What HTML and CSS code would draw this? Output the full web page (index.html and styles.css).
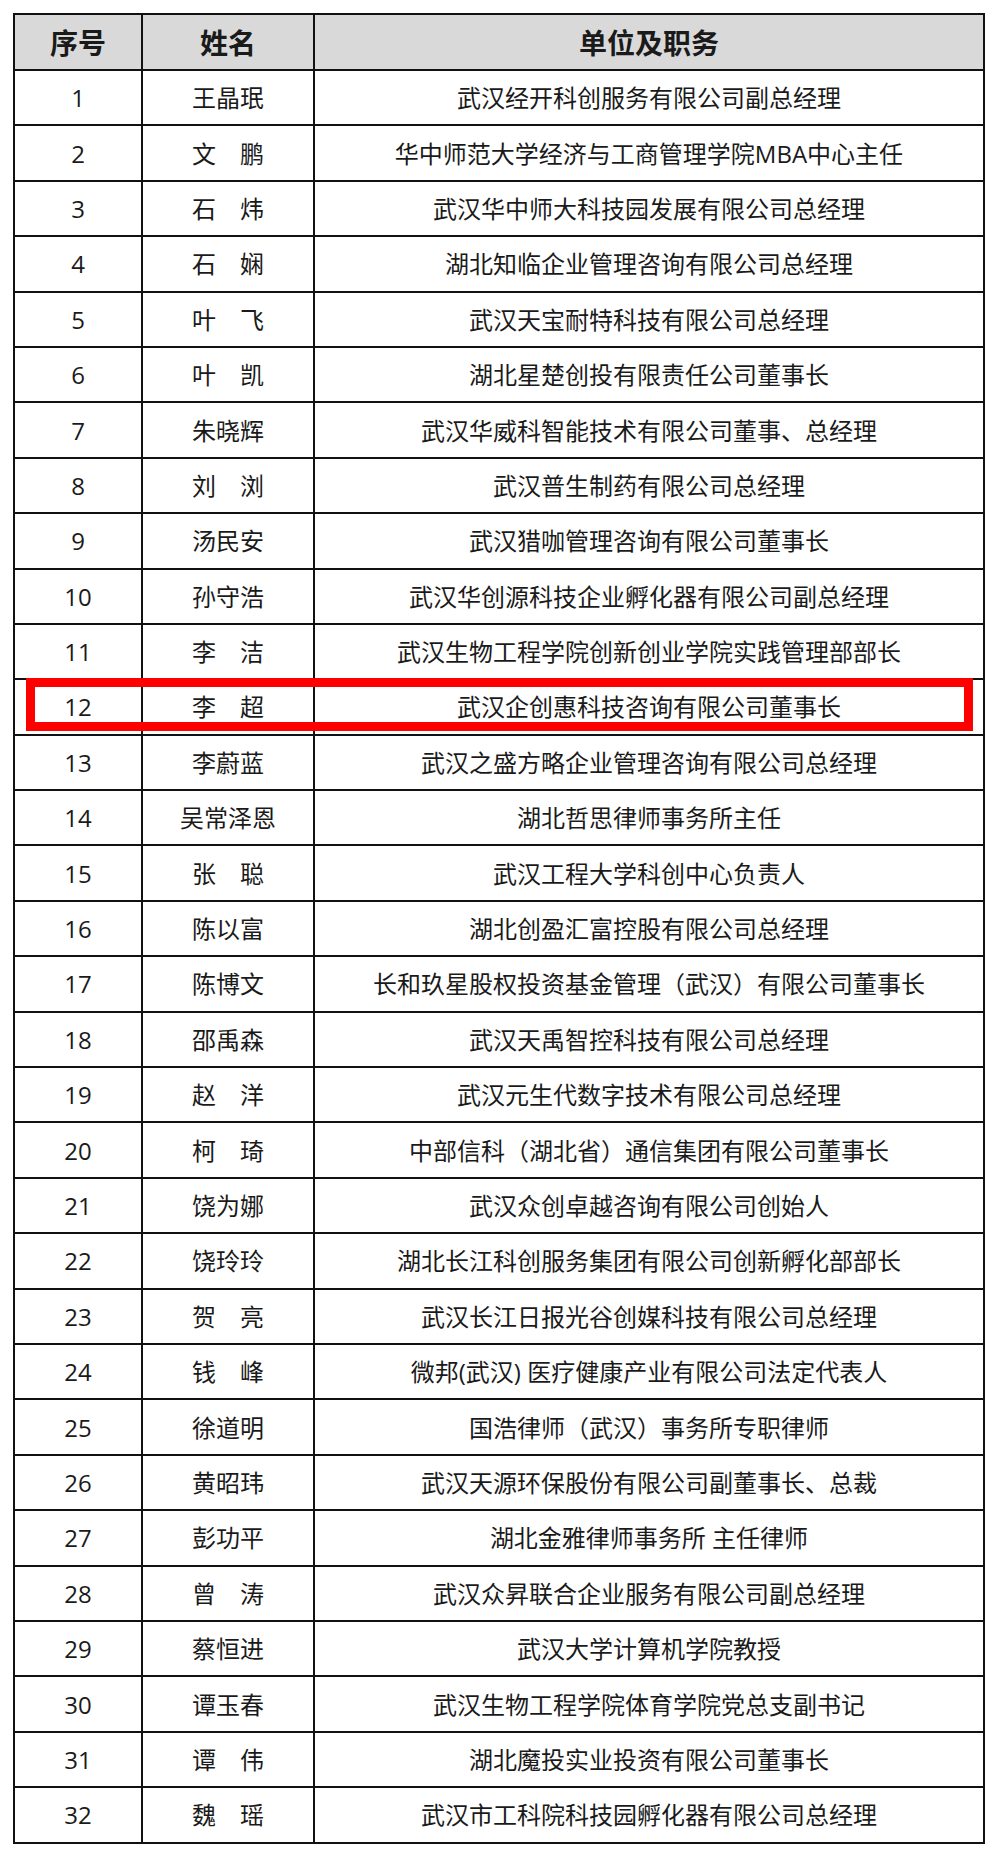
FILE: index.html
```html
<!DOCTYPE html>
<html lang="zh-CN">
<head>
<meta charset="utf-8">
<title>名单</title>
<link rel="stylesheet" href="styles.css">
</head>
<body>
<div class="sheet">
  <div class="grid">
    <div class="cell head">序号</div><div class="cell head">姓名</div><div class="cell head">单位及职务</div>
    <div class="cell">1</div><div class="cell">王晶珉</div><div class="cell">武汉经开科创服务有限公司副总经理</div>
    <div class="cell">2</div><div class="cell">文　鹏</div><div class="cell">华中师范大学经济与工商管理学院MBA中心主任</div>
    <div class="cell">3</div><div class="cell">石　炜</div><div class="cell">武汉华中师大科技园发展有限公司总经理</div>
    <div class="cell">4</div><div class="cell">石　娴</div><div class="cell">湖北知临企业管理咨询有限公司总经理</div>
    <div class="cell">5</div><div class="cell">叶　飞</div><div class="cell">武汉天宝耐特科技有限公司总经理</div>
    <div class="cell">6</div><div class="cell">叶　凯</div><div class="cell">湖北星楚创投有限责任公司董事长</div>
    <div class="cell">7</div><div class="cell">朱晓辉</div><div class="cell">武汉华威科智能技术有限公司董事、总经理</div>
    <div class="cell">8</div><div class="cell">刘　浏</div><div class="cell">武汉普生制药有限公司总经理</div>
    <div class="cell">9</div><div class="cell">汤民安</div><div class="cell">武汉猎咖管理咨询有限公司董事长</div>
    <div class="cell">10</div><div class="cell">孙守浩</div><div class="cell">武汉华创源科技企业孵化器有限公司副总经理</div>
    <div class="cell">11</div><div class="cell">李　洁</div><div class="cell">武汉生物工程学院创新创业学院实践管理部部长</div>
    <div class="cell">12</div><div class="cell">李　超</div><div class="cell">武汉企创惠科技咨询有限公司董事长</div>
    <div class="cell">13</div><div class="cell">李蔚蓝</div><div class="cell">武汉之盛方略企业管理咨询有限公司总经理</div>
    <div class="cell">14</div><div class="cell">吴常泽恩</div><div class="cell">湖北哲思律师事务所主任</div>
    <div class="cell">15</div><div class="cell">张　聪</div><div class="cell">武汉工程大学科创中心负责人</div>
    <div class="cell">16</div><div class="cell">陈以富</div><div class="cell">湖北创盈汇富控股有限公司总经理</div>
    <div class="cell">17</div><div class="cell">陈博文</div><div class="cell">长和玖星股权投资基金管理（武汉）有限公司董事长</div>
    <div class="cell">18</div><div class="cell">邵禹森</div><div class="cell">武汉天禹智控科技有限公司总经理</div>
    <div class="cell">19</div><div class="cell">赵　洋</div><div class="cell">武汉元生代数字技术有限公司总经理</div>
    <div class="cell">20</div><div class="cell">柯　琦</div><div class="cell">中部信科（湖北省）通信集团有限公司董事长</div>
    <div class="cell">21</div><div class="cell">饶为娜</div><div class="cell">武汉众创卓越咨询有限公司创始人</div>
    <div class="cell">22</div><div class="cell">饶玲玲</div><div class="cell">湖北长江科创服务集团有限公司创新孵化部部长</div>
    <div class="cell">23</div><div class="cell">贺　亮</div><div class="cell">武汉长江日报光谷创媒科技有限公司总经理</div>
    <div class="cell">24</div><div class="cell">钱　峰</div><div class="cell">微邦(武汉) 医疗健康产业有限公司法定代表人</div>
    <div class="cell">25</div><div class="cell">徐道明</div><div class="cell">国浩律师（武汉）事务所专职律师</div>
    <div class="cell">26</div><div class="cell">黄昭玮</div><div class="cell">武汉天源环保股份有限公司副董事长、总裁</div>
    <div class="cell">27</div><div class="cell">彭功平</div><div class="cell">湖北金雅律师事务所 主任律师</div>
    <div class="cell">28</div><div class="cell">曾　涛</div><div class="cell">武汉众昇联合企业服务有限公司副总经理</div>
    <div class="cell">29</div><div class="cell">蔡恒进</div><div class="cell">武汉大学计算机学院教授</div>
    <div class="cell">30</div><div class="cell">谭玉春</div><div class="cell">武汉生物工程学院体育学院党总支副书记</div>
    <div class="cell">31</div><div class="cell">谭　伟</div><div class="cell">湖北魔投实业投资有限公司董事长</div>
    <div class="cell">32</div><div class="cell">魏　瑶</div><div class="cell">武汉市工科院科技园孵化器有限公司总经理</div>
  </div>
  <div class="highlight"></div>
</div>
</body>
</html>
```

FILE: styles.css
```css
html, body {
  margin: 0;
  padding: 0;
  background: #ffffff;
}

body {
  font-family: "Open Sans", "Noto Sans CJK SC", sans-serif;
  color: #1a1a1a;
}

.sheet {
  position: relative;
  margin: 13px 0 0 13px;
  width: 972px;
}

.grid {
  display: grid;
  grid-template-columns: 128px 172px 670px;
  grid-template-rows: 56px;
  grid-auto-rows: 55.4px;
  border-left: 2px solid #111;
  border-top: 2px solid #111;
}

.cell {
  box-sizing: border-box;
  border-right: 2px solid #111;
  border-bottom: 2px solid #111;
  display: flex;
  align-items: center;
  justify-content: center;
  font-size: 24px;
  line-height: 1;
  white-space: nowrap;
  padding-top: 1px;
}

.head {
  background: #d9d9d9;
  font-weight: 700;
  font-size: 28px;
  padding-top: 2px;
}

.highlight {
  position: absolute;
  left: 13px;
  top: 665px;
  width: 947px;
  height: 53px;
  box-sizing: border-box;
  border: 9px solid #ff0000;
  pointer-events: none;
}
```
